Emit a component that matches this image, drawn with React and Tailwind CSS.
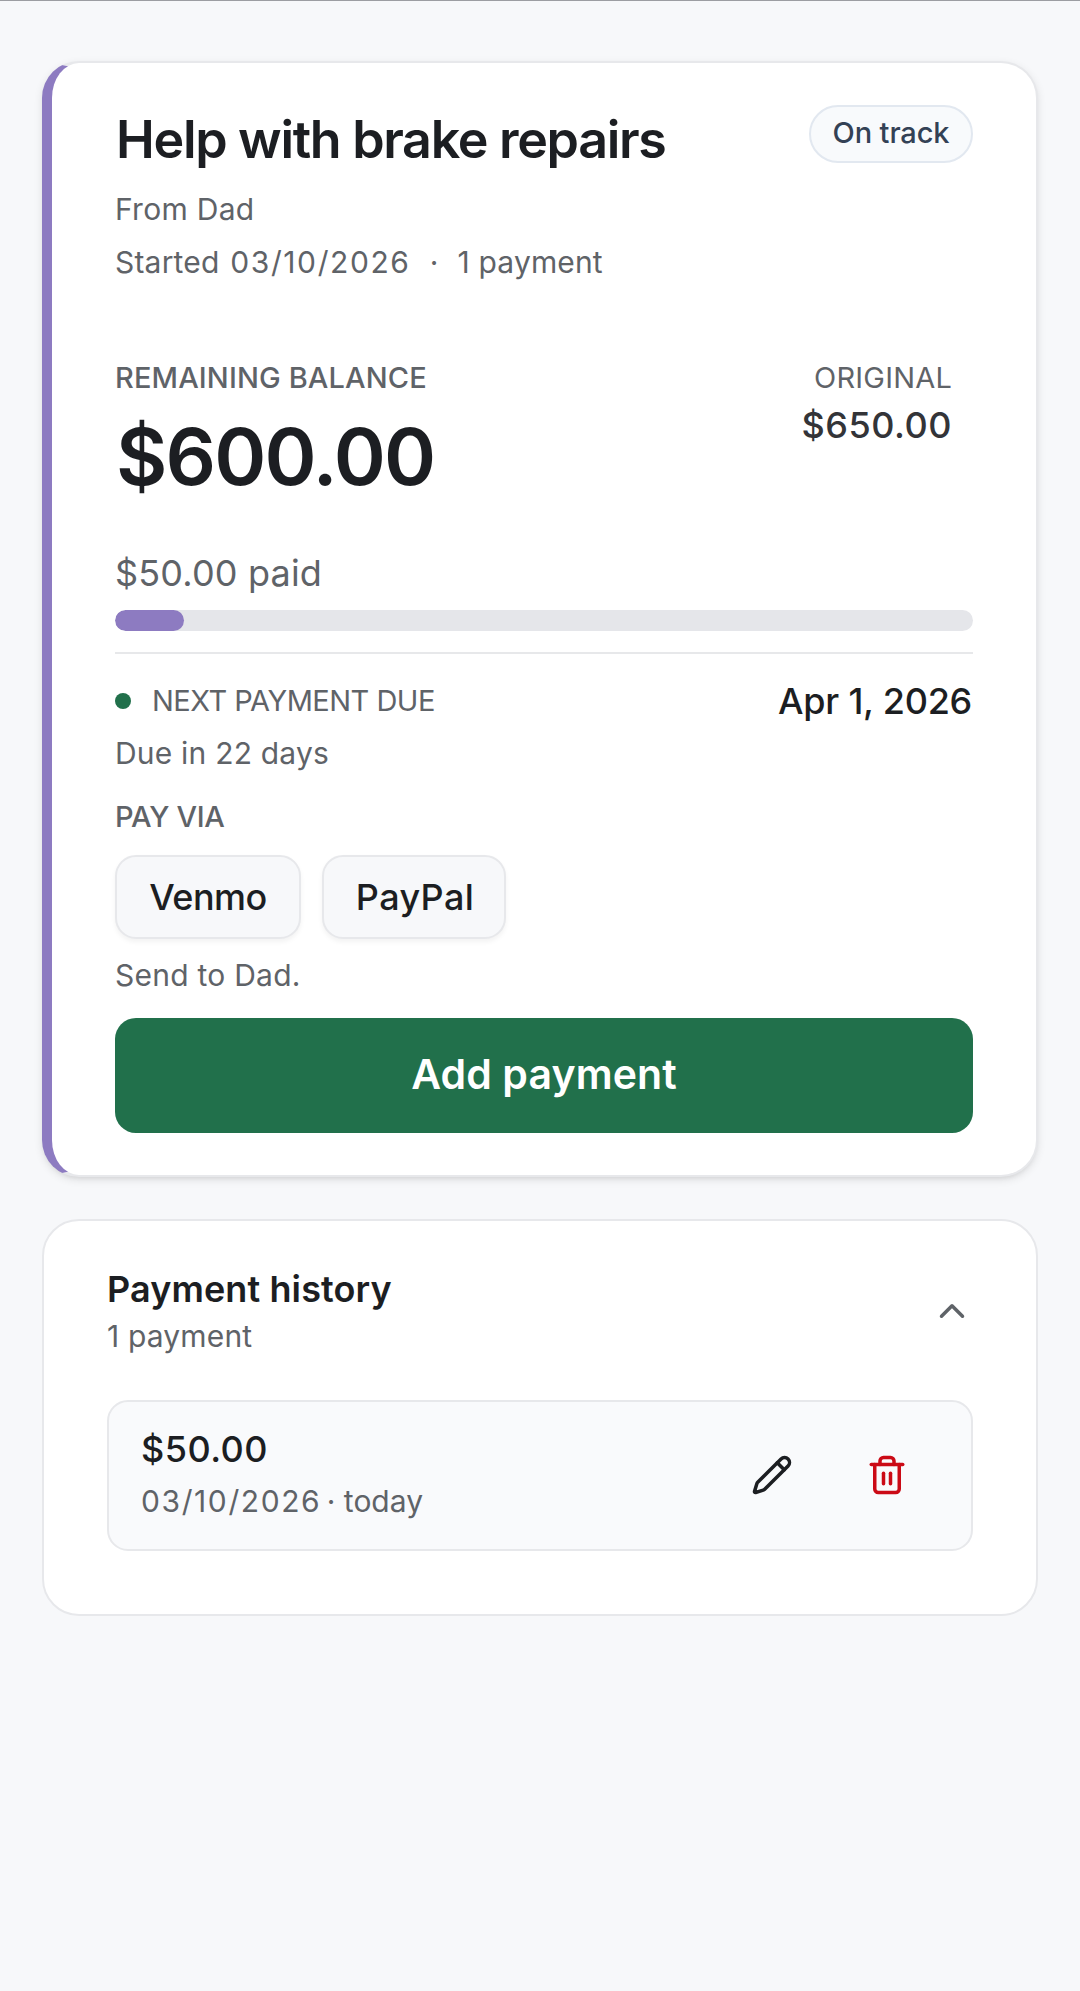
import { ChevronUp, Pencil, Trash2 } from 'lucide-react';

const muted = 'text-[#5f6368]';

function LoanCard() {
  return (
    <section className="flex flex-col rounded-[37px] border-2 border-l-[10px] border-[#e7e8eb] border-l-[#8d7bc1] bg-white px-[63px] pt-[42px] pb-[42px] shadow-[0_3px_8px_rgba(0,0,0,0.10),0_3px_5px_-3px_rgba(0,0,0,0.10)]">
      <div className="flex items-start justify-between">
        <h1 className="pl-px text-[52px] leading-[70px] font-semibold tracking-[-1.32px] text-[#1c1e22]">
          Help with brake repairs
        </h1>
        <span className="flex h-[58px] w-[164px] items-center justify-center rounded-full border-2 border-[#e2e8f0] bg-[#f8fafc] pb-[3px] text-[29px] font-medium tracking-[-0.1px] whitespace-nowrap text-[#334155]">
          On track
        </span>
      </div>
      <p className={`mt-[13px] text-[30px] leading-[42px] tracking-[0.28px] ${muted}`}>From Dad</p>
      <p className={`mt-[11px] flex text-[30px] leading-[42px] ${muted}`}>
        <span className="tracking-[0.2px]">Started&nbsp;</span>
        <span className="pl-[2px] tracking-[1.6px]">03/10/2026</span>
        <span className="w-[47px] text-center">·</span>
        <span className="tracking-[0.15px]">1 payment</span>
      </p>

      <div className="mt-[73px] flex items-start justify-between">
        <div>
          <p className={`text-[29px] leading-[43px] font-medium tracking-[0.13px] ${muted}`}>REMAINING BALANCE</p>
          <p className="mt-[18px] pl-px text-[79px] leading-[79px] font-semibold tracking-[-1.84px] text-[#1c1e22]">$600.00</p>
        </div>
        <div className="pr-[21px] text-right">
          <p className={`text-[29px] leading-[43px] tracking-[0.2px] ${muted}`}>ORIGINAL</p>
          <p className="text-[36px] leading-[53px] font-medium tracking-[0.51px] text-[#333438]">$650.00</p>
        </div>
      </div>

      <p className={`mt-[51px] text-[36px] leading-[52px] tracking-[0.17px] ${muted}`}>$50.00 paid</p>
      <div className="mt-[11px] h-[21px] overflow-hidden rounded-full bg-[#e5e6ea]">
        <div className="h-full w-[8%] rounded-full bg-[#8d7bc1]" />
      </div>
      <div className="mt-[21px] h-[2px] bg-[#e7e8ea]" />

      <div className="mt-[21px] flex h-[52px] items-center justify-between">
        <div className="flex items-center gap-[21px]">
          <span className="size-4 rounded-full bg-[#21704b]" />
          <span className={`text-[29px] leading-[42px] tracking-[-0.51px] ${muted}`}>NEXT PAYMENT DUE</span>
        </div>
        <span className="pr-px text-[36px] leading-[52px] font-medium tracking-[-0.25px] text-[#1c1e22]">Apr 1, 2026</span>
      </div>
      <p className={`mt-[5px] text-[30px] leading-[42px] tracking-[0.2px] ${muted}`}>Due in 22 days</p>

      <p className={`mt-[21px] text-[29px] leading-[43px] font-medium tracking-[-0.3px] ${muted}`}>PAY VIA</p>
      <div className="mt-[17px] flex gap-[21px] text-[36px] font-medium text-[#1c1e22]">
        <button className="flex h-[84px] w-[186px] items-center justify-center rounded-[21px] border-2 border-[#e7e8eb] bg-[#f7f8fa] tracking-[-0.5px] shadow-[0_3px_5px_rgba(0,0,0,0.05)]">
          Venmo
        </button>
        <button className="flex h-[84px] w-[184px] items-center justify-center rounded-[21px] border-2 border-[#e7e8eb] bg-[#f7f8fa] pl-[2px] tracking-[0.37px] shadow-[0_3px_5px_rgba(0,0,0,0.05)]">
          PayPal
        </button>
      </div>
      <p className={`mt-[15px] text-[30px] leading-[42px] tracking-[0.25px] ${muted}`}>Send to Dad.</p>
      <button className="mt-[22px] flex h-[115px] items-center justify-center rounded-[21px] bg-[#21704b] pb-[2px] text-[41px] font-semibold tracking-[0.12px] text-white">
        Add payment
      </button>
    </section>
  );
}

function PaymentHistory() {
  return (
    <section className="mt-[42px] rounded-[37px] border-2 border-[#e7e8eb] bg-white px-[63px] pt-[42px] pb-[63px]">
      <div className="flex items-center justify-between">
        <div>
          <h2 className="text-[36px] leading-[52px] font-semibold tracking-[0.1px] text-[#1c1e22]">Payment history</h2>
          <p className={`text-[30px] leading-[42px] tracking-[0.15px] ${muted}`}>1 payment</p>
        </div>
        <ChevronUp className={`mt-[2px] ${muted}`} size={42} strokeWidth={2} />
      </div>
      <div className="mt-[43px] flex h-[151px] items-center justify-between rounded-[21px] border-2 border-[#e7e8eb] bg-[#f9fafc] pr-[27px] pl-[32px]">
        <div className="pb-[7px]">
          <p className="text-[36px] leading-[53px] font-medium tracking-[0.47px] text-[#1c1e22]">$50.00</p>
          <p className={`mt-[4px] flex text-[30px] leading-[42px] ${muted}`}>
            <span className="tracking-[1.6px]">03/10/2026</span>
            <span className="-ml-[3px]">&nbsp;·&nbsp;</span>
            <span>today</span>
          </p>
        </div>
        <div className="flex pb-[2px]">
          <button className="flex size-[115px] items-center justify-center text-[#1c1e22]" aria-label="Edit payment">
            <Pencil size={42} strokeWidth={2} />
          </button>
          <button className="flex size-[115px] items-center justify-center text-[#cb0a16]" aria-label="Delete payment">
            <Trash2 size={42} strokeWidth={2} />
          </button>
        </div>
      </div>
    </section>
  );
}

export default function App() {
  return (
    <main className="min-h-[1991px] border-t border-[#9c9da2] bg-[#f7f8fa] px-[42px] pt-[60px] font-[Inter,sans-serif]">
      <LoanCard />
      <PaymentHistory />
    </main>
  );
}
